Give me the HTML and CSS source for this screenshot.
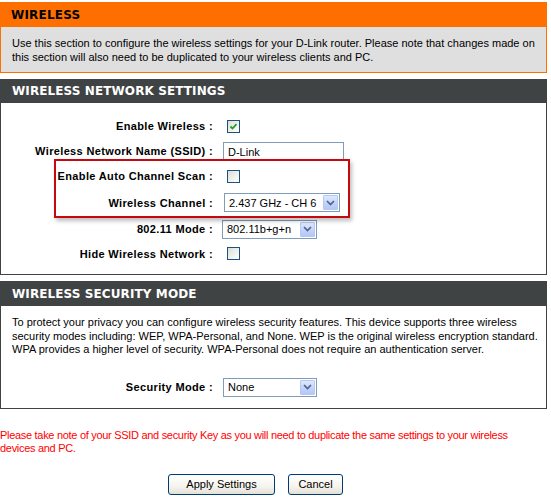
FILE: index.html
```html
<!DOCTYPE html>
<html lang="en">
<head>
<meta charset="utf-8">
<title>Wireless</title>
<link rel="stylesheet" href="styles.css">
</head>
<body>
<div class="page">
  <section class="intro">
    <h1 class="intro-title">WIRELESS</h1>
    <p class="intro-text">Use this section to configure the wireless settings for your D-Link router. Please note that changes made on this section will also need to be duplicated to your wireless clients and PC.</p>
  </section>

  <section class="panel">
    <h2 class="panel-title">WIRELESS NETWORK SETTINGS</h2>
    <div class="panel-body settings">
      <div class="form-row r1">
        <span class="label">Enable Wireless :</span>
        <span class="checkbox checked"><svg width="11" height="11" viewBox="0 0 11 11"><path d="M2.5 5.5 L4.5 7.5 L8.5 3.2" fill="none" stroke="#21a121" stroke-width="1.8"/></svg></span>
      </div>
      <div class="form-row r2">
        <span class="label">Wireless Network Name (SSID) :</span>
        <span class="textbox">D-Link</span>
      </div>
      <div class="form-row r3">
        <span class="label">Enable Auto Channel Scan :</span>
        <span class="checkbox"></span>
      </div>
      <div class="form-row r4">
        <span class="label">Wireless Channel :</span>
        <span class="select sel-channel"><span class="sel-value">2.437 GHz - CH 6</span><span class="sel-arrow"><svg width="9" height="6" viewBox="0 0 9 6"><path d="M1 1 L4.5 4.5 L8 1" fill="none" stroke="#4d6185" stroke-width="1.6"/></svg></span></span>
      </div>
      <div class="form-row r5">
        <span class="label">802.11 Mode :</span>
        <span class="select sel-mode"><span class="sel-value">802.11b+g+n</span><span class="sel-arrow"><svg width="9" height="6" viewBox="0 0 9 6"><path d="M1 1 L4.5 4.5 L8 1" fill="none" stroke="#4d6185" stroke-width="1.6"/></svg></span></span>
      </div>
      <div class="form-row r6">
        <span class="label">Hide Wireless Network :</span>
        <span class="checkbox"></span>
      </div>
      <div class="highlight"></div>
    </div>
  </section>

  <section class="panel security">
    <h2 class="panel-title">WIRELESS SECURITY MODE</h2>
    <div class="panel-body sec-body">
      <p class="sec-text">To protect your privacy you can configure wireless security features. This device supports three wireless security modes including: WEP, WPA-Personal, and None. WEP is the original wireless encryption standard. WPA provides a higher level of security. WPA-Personal does not require an authentication server.</p>
      <div class="form-row sec-row">
        <span class="label">Security Mode :</span>
        <span class="select sel-security"><span class="sel-value">None</span><span class="sel-arrow"><svg width="9" height="6" viewBox="0 0 9 6"><path d="M1 1 L4.5 4.5 L8 1" fill="none" stroke="#4d6185" stroke-width="1.6"/></svg></span></span>
      </div>
    </div>
  </section>

  <p class="note">Please take note of your SSID and security Key as you will need to duplicate the same settings to your wireless devices and PC.</p>

  <div class="actions">
    <button class="btn btn-apply" type="button">Apply Settings</button>
    <button class="btn btn-cancel" type="button">Cancel</button>
  </div>
</div>
</body>
</html>
```

FILE: styles.css
```css
html, body {
  margin: 0;
  padding: 0;
  background: #ffffff;
}
body {
  font-family: "Liberation Sans", Arial, sans-serif;
  font-size: 11px;
  color: #000;
}
.page {
  width: 547px;
  padding-top: 2px;
}
.intro-title {
  margin: 0;
  height: 25px;
  line-height: 26px;
  background: #ff6f00;
  padding-left: 11px;
  font-family: "DejaVu Sans", Verdana, sans-serif;
  font-weight: bold;
  font-size: 12px;
  color: #000;
  letter-spacing: 0.2px;
}
.intro-text {
  margin: 0;
  background: #dfdfdf;
  border: 1px solid #ff6f00;
  border-top: none;
  padding: 9px 10px 8px 11px;
  line-height: 14px;
}
.panel {
  margin-top: 6px;
}
.panel-title {
  margin: 0;
  height: 24px;
  line-height: 25px;
  background: #404343;
  color: #fff;
  padding-left: 12px;
  font-family: "DejaVu Sans", Verdana, sans-serif;
  font-weight: bold;
  font-size: 12px;
  letter-spacing: 0.1px;
}
.security .panel-title {
  height: 25px;
  line-height: 26px;
}
.panel-body {
  border: 1px solid #404343;
  border-top: none;
}
.settings {
  position: relative;
  padding: 11px 0 9px 0;
}
.form-row {
  display: grid;
  grid-template-columns: 212px auto;
  column-gap: 10px;
  align-items: center;
  justify-items: start;
}
.form-row .label {
  justify-self: end;
  font-weight: bold;
  white-space: nowrap;
  letter-spacing: 0.35px;
}
.r1 { height: 24px; }
.r2 { height: 25px; }
.r3 { height: 26px; }
.r4 { height: 27px; }
.r5 { height: 26px; }
.r6 { height: 23px; }

.checkbox {
  box-sizing: border-box;
  width: 13px;
  height: 13px;
  margin-left: 4px;
  border: 1px solid #1c5180;
  background: linear-gradient(135deg, #dcdcd7 0%, #f2f2ef 60%, #ffffff 100%);
  display: flex;
  align-items: center;
  justify-content: center;
}
.checkbox svg { display: block; }

.textbox {
  box-sizing: border-box;
  width: 121px;
  height: 18px;
  border: 1px solid #7f9db9;
  background: #fff;
  padding: 2px 0 0 4px;
  line-height: 14px;
}

.select {
  box-sizing: border-box;
  height: 19px;
  border: 1px solid #7f9db9;
  background: #fff;
  display: flex;
  align-items: center;
  padding: 1px;
}
.sel-value {
  flex: 1;
  padding-left: 3px;
  white-space: nowrap;
}
.sel-arrow {
  width: 15px;
  height: 15px;
  box-sizing: border-box;
  border: 1px solid #b5c8f3;
  border-radius: 1px;
  background: linear-gradient(180deg, #dfe8fd 0%, #c2d3fb 55%, #b4c8f6 100%);
  display: flex;
  align-items: center;
  justify-content: center;
}
.sel-arrow svg { display: block; }
.sel-channel { width: 116px; margin-left: 1px; }
.sel-mode { width: 95px; margin-left: -1px; }
.sel-security { width: 94px; }

.highlight {
  position: absolute;
  left: 53px;
  top: 56px;
  width: 296px;
  height: 59px;
  box-sizing: border-box;
  border: 2px solid #c4090f;
  box-shadow: 2px 3px 4px rgba(0, 0, 0, 0.25);
  pointer-events: none;
}

.sec-body {
  padding: 10px 0 10px 0;
}
.sec-text {
  margin: 0;
  padding: 0 0 0 11px;
  line-height: 13.5px;
}
.sec-row {
  margin-top: 20px;
  height: 21px;
}

.note {
  margin: 20px 0 0 0;
  padding-right: 30px;
  color: #ff0000;
  line-height: 13px;
  letter-spacing: -0.3px;
}

.actions {
  display: flex;
  justify-content: center;
  gap: 13px;
  margin-top: 19px;
  padding-right: 36px;
}
.btn {
  font-family: "Liberation Sans", Arial, sans-serif;
  font-size: 11px;
  color: #000;
  height: 21px;
  border: 1px solid #003c74;
  border-radius: 3px;
  background: linear-gradient(180deg, #ffffff 0%, #f5f4ee 60%, #e3e1d6 100%);
  padding: 0;
}
.btn-apply { width: 107px; }
.btn-cancel { width: 55px; }
```
